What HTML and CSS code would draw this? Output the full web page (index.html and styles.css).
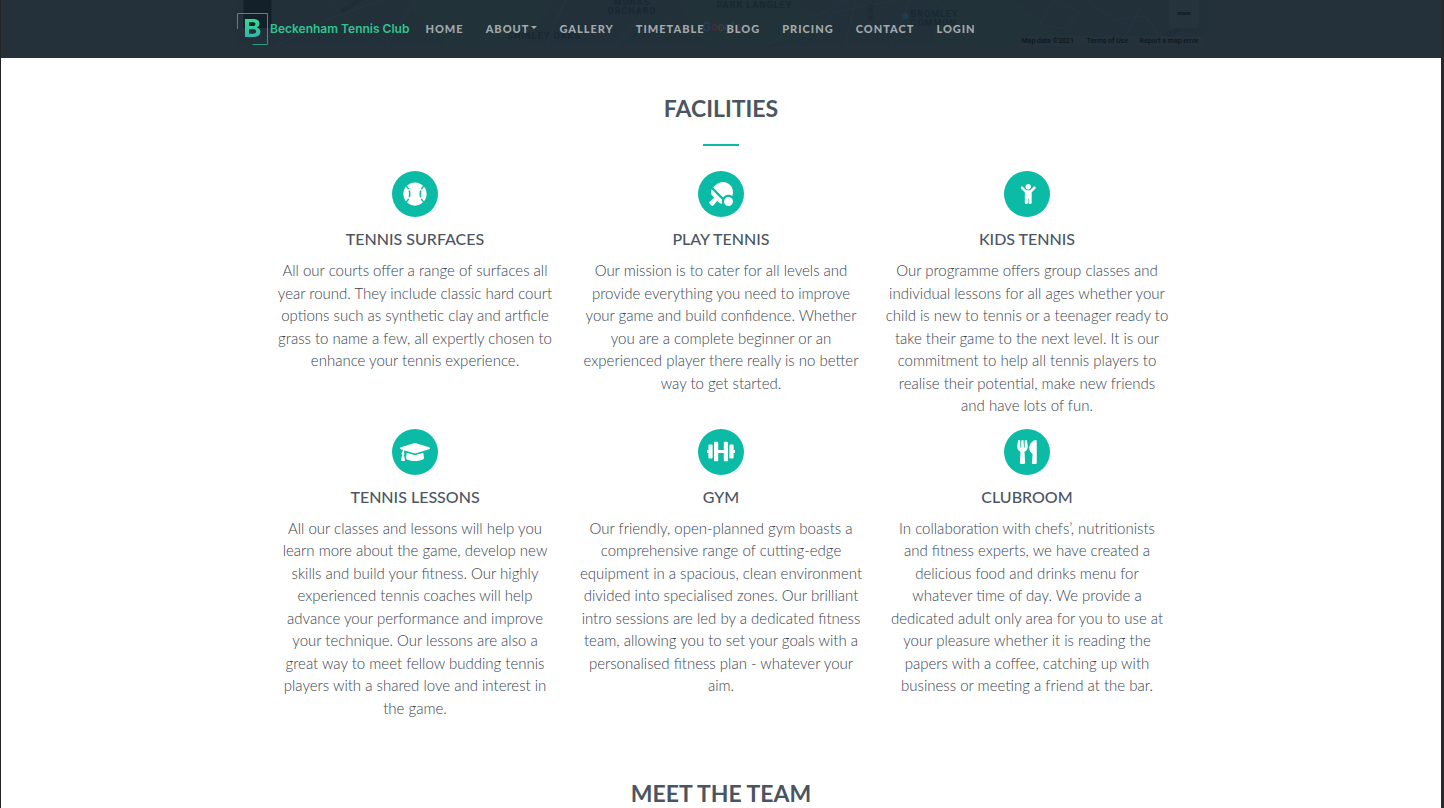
FILE: index.html
```html
<!DOCTYPE html>
<html lang="en">
<head>
<meta charset="utf-8">
<title>Beckenham Tennis Club</title>
<link rel="stylesheet" href="styles.css">
</head>
<body>
<header class="navbar">
  <svg class="map" viewBox="0 0 971 46" aria-hidden="true">
    <rect width="971" height="46" fill="#22303a"/>
    <path fill="#213238" d="M170 0h150l-30 46h-80zM440 0h120l40 30-70 16h-60zM690 0h90l60 46H700z"/>
    <rect x="8" width="28" height="28" fill="#142029"/>
    <path fill="none" stroke="#26353f" d="M40 46l60-30 50-16M90 0l50 46M150 46l30-46M200 0l60 46M240 46l70-46M330 0l-20 46M380 46l40-46M430 20l60 26M500 46l40-46M530 46l50-30 30-16M560 46l40-34 60-12M610 46l10-46M655 46l20-46M700 0l50 46M804 26l14-26 26 12-14 16zM850 0l30 20 30-4 20 30M885 46l20-40"/>
    <g class="map-label">
      <text x="378" y="5">MONKS</text>
      <text x="372" y="14">ORCHARD</text>
      <text x="481" y="8">PARK LANGLEY</text>
      <text x="272" y="39">SHIRLEY OAKS</text>
      <text x="675" y="17">BROMLEY</text>
      <text x="675" y="26">COMMON</text>
    </g>
    <g class="map-road">
      <text transform="translate(107 14) rotate(-35)">Windmill</text>
      <text transform="translate(637 20) rotate(-88)">B265</text>
      <text transform="translate(932 37) rotate(-25)">Orpin</text>
    </g>
    <text class="map-brand" x="467" y="31"><tspan fill="#263e59">G</tspan><tspan fill="#442e38">o</tspan><tspan fill="#403b36">o</tspan><tspan fill="#263e59">g</tspan><tspan fill="#26453c">l</tspan><tspan fill="#442e38">e</tspan></text>
    <circle cx="670" cy="16" r="3" fill="#203d50"/>
    <rect x="934" width="29" height="28" fill="#25343c"/>
    <rect x="942" y="12" width="13" height="3" fill="#17232b"/>
    <rect x="782" y="36" width="189" height="10" fill="#24323b"/>
    <g class="map-credit">
      <text x="786" y="43">Map data ©2021</text>
      <text x="851" y="43">Terms of Use</text>
      <text x="904" y="43">Report a map error</text>
    </g>
  </svg>
  <nav class="nav">
    <a class="brand" href="#">
      <svg class="brand-mark" viewBox="0 0 33 34" aria-hidden="true">
        <defs><linearGradient id="mint" x2="0" y2="1"><stop stop-color="#36d991"/><stop offset="1" stop-color="#35b5ad"/></linearGradient></defs>
        <path d="M1.500 17V1.500H31.500V32.500H16.500" fill="none" stroke="#2b9b83"/>
        <path fill="url(#mint)" fill-rule="evenodd" d="M9 7h8.500c4 0 6 1.700 6 4.600 0 1.900-1 3.200-2.600 3.800 2.200.6 3.500 2.200 3.500 4.400 0 3.400-2.400 5.200-6.500 5.200H9zM13 10.200v3.900h3.800c1.700 0 2.600-.6 2.600-2 0-1.300-.9-1.900-2.600-1.900zM13 17.300v4.400h4.200c1.900 0 2.900-.7 2.900-2.200s-1-2.200-2.900-2.200z"/>
      </svg>
      <span>Beckenham Tennis Club</span>
    </a>
    <ul class="menu">
      <li><a href="#">Home</a></li>
      <li><a class="dropdown" href="#">About</a></li>
      <li><a href="#">Gallery</a></li>
      <li><a href="#">Timetable</a></li>
      <li><a href="#">Blog</a></li>
      <li><a href="#">Pricing</a></li>
      <li><a href="#">Contact</a></li>
      <li><a href="#">Login</a></li>
    </ul>
  </nav>
</header>
<main>
  <section class="section">
    <h2>Facilities</h2>
    <hr class="rule">
    <div class="features">
      <article class="feature">
        <div class="badge"><svg width="24" height="24" viewBox="0 0 496 512" aria-hidden="true"><path d="M368.500 363.900l28.800-13.900c11.100 22.900 26 43.200 44.100 60.900 34-42.500 54.500-96.300 54.500-154.900 0-58.500-20.400-112.200-54.200-154.600-17.800 17.300-32.600 37.100-43.600 59.500l-28.700-14.100c12.800-26 30-49 50.800-69C375.600 34.700 315 8 248 8 181.100 8 120.500 34.600 75.900 77.700c20.700 19.900 37.900 42.900 50.700 68.800l-28.700 14.100c-11-22.300-25.700-42.100-43.500-59.400C20.400 143.700 0 197.400 0 256c0 58.600 20.400 112.300 54.400 154.700 18.200-17.700 33.200-38 44.300-61l28.800 13.900c-12.900 26.700-30.300 50.300-51.500 70.700 44.500 43.100 105.100 69.700 172 69.700 66.800 0 127.300-26.500 171.900-69.500-21.100-20.400-38.500-43.900-51.400-70.600zm-228.300-32l-30.500-9.800c14.900-46.400 12.700-93.800-.6-134l30.400-10c15 45.600 18 99.900.7 153.800zm216.300-153.400l30.400 10c-13.200 40.100-15.500 87.500-.6 134l-30.500 9.800c-17.300-54-14.300-108.300.7-153.800z"/></svg></div>
        <h3>Tennis Surfaces</h3>
        <p>All our courts offer a range of surfaces all year round. They include classic hard court options such as synthetic clay and artficle grass to name a few, all expertly chosen to enhance your tennis experience.</p>
      </article>
      <article class="feature">
        <div class="badge"><svg width="24" height="24" viewBox="0 0 512 512" aria-hidden="true"><path d="M496.200 296.500C527.700 218.700 512 126.200 449 63.100 365.100-21 229-21 145.100 63.100l-56 56.100 211.500 211.500c46.100-62.100 131.500-77.400 195.600-34.200zm-217.900 79.700L57.900 155.900c-27.300 45.300-21.700 105 17.300 144.100l34.500 34.600L6.700 424c-8.600 7.500-9.100 20.700-1 28.800l53.400 53.500c8 8.100 21.200 7.600 28.700-1L177.100 402l35.700 35.700c19.700 19.700 44.600 30.500 70.300 33.300-7.100-17-11-35.600-11-55.100-.1-13.800 2.500-27 6.200-39.700zM416 320c-53 0-96 43-96 96s43 96 96 96 96-43 96-96-43-96-96-96z"/></svg></div>
        <h3>Play Tennis</h3>
        <p>Our mission is to cater for all levels and provide everything you need to improve your game and build confidence. Whether you are a complete beginner or an experienced player there really is no better way to get started.</p>
      </article>
      <article class="feature">
        <div class="badge"><svg width="18" height="20" viewBox="-64 0 448 512" aria-hidden="true"><path d="M120 72c0-39.765 32.235-72 72-72s72 32.235 72 72c0 39.764-32.235 72-72 72s-72-32.236-72-72zm254.627 1.373c-12.496-12.497-32.758-12.497-45.254 0L242.745 160H141.254L54.627 73.373c-12.496-12.497-32.758-12.497-45.254 0-12.497 12.497-12.497 32.758 0 45.255L104 213.254V480c0 17.673 14.327 32 32 32h16c17.673 0 32-14.327 32-32V368h16v112c0 17.673 14.327 32 32 32h16c17.673 0 32-14.327 32-32V213.254l94.627-94.627c12.497-12.497 12.497-32.757 0-45.254z"/></svg></div>
        <h3>Kids Tennis</h3>
        <p>Our programme offers group classes and individual lessons for all ages whether your child is new to tennis or a teenager ready to take their game to the next level. It is our commitment to help all tennis players to realise their potential, make new friends and&nbsp;have lots of fun.</p>
      </article>
      <article class="feature">
        <div class="badge"><svg width="30" height="24" viewBox="0 0 640 512" aria-hidden="true"><path d="M622.340 153.200L343.400 67.500c-15.200-4.670-31.600-4.670-46.790 0L17.660 153.200c-23.540 7.230-23.540 38.360 0 45.590l48.630 14.940c-10.670 13.190-17.230 29.280-17.880 46.900C38.780 266.150 32 276.110 32 288c0 10.780 5.680 19.850 13.860 25.650L20.330 428.530C18.110 438.520 25.710 448 35.940 448h56.110c10.240 0 17.840-9.480 15.620-19.470L82.140 313.650C90.320 307.850 96 298.780 96 288c0-11.570-6.470-21.250-15.660-26.870.76-15.020 8.440-28.300 20.690-36.720L296.600 284.500c9.060 2.780 26.440 6.250 46.790 0l278.950-85.700c23.550-7.240 23.550-38.360 0-45.600zM352.790 315.090c-28.530 8.760-52.840 3.920-65.590 0l-145.020-44.550L128 384c0 35.350 85.960 64 192 64s192-28.650 192-64l-14.180-113.470-145.030 44.560z"/></svg></div>
        <h3>Tennis Lessons</h3>
        <p>All our classes and lessons will help you learn more about the game, develop new skills and build your fitness. Our highly experienced tennis coaches will help advance your performance and improve your technique. Our lessons are also a great&nbsp;way to meet fellow budding tennis players with a shared love and interest in the&nbsp;game.</p>
      </article>
      <article class="feature">
        <div class="badge"><svg width="28" height="23" viewBox="0 0 640 512" aria-hidden="true"><path d="M104 96H56c-13.300 0-24 10.700-24 24v104H8c-4.400 0-8 3.600-8 8v48c0 4.400 3.600 8 8 8h24v104c0 13.300 10.700 24 24 24h48c13.300 0 24-10.700 24-24V120c0-13.300-10.700-24-24-24zm528 128h-24V120c0-13.300-10.700-24-24-24h-48c-13.300 0-24 10.700-24 24v272c0 13.300 10.700 24 24 24h48c13.300 0 24-10.700 24-24V288h24c4.400 0 8-3.600 8-8v-48c0-4.400-3.600-8-8-8zM456 32h-48c-13.300 0-24 10.700-24 24v168H256V56c0-13.300-10.700-24-24-24h-48c-13.300 0-24 10.700-24 24v400c0 13.300 10.700 24 24 24h48c13.300 0 24-10.700 24-24V288h128v168c0 13.300 10.700 24 24 24h48c13.300 0 24-10.700 24-24V56c0-13.300-10.700-24-24-24z"/></svg></div>
        <h3>Gym</h3>
        <p>Our friendly, open-planned gym boasts a comprehensive range of cutting-edge equipment in a spacious, clean environment divided into specialised zones. Our brilliant intro sessions are led by a dedicated fitness team, allowing you to set your goals with a personalised fitness plan - whatever your aim.</p>
      </article>
      <article class="feature">
        <div class="badge"><svg width="20" height="24" viewBox="0 0 416 512" aria-hidden="true"><path d="M207.900 15.200c.8 4.700 16.100 94.500 16.100 128.800 0 52.300-27.800 89.600-68.900 104.600L168 486.700c.7 13.700-10.200 25.300-24 25.300H80c-13.700 0-24.700-11.500-24-25.300l12.900-238.100C27.700 233.600 0 196.200 0 144 0 109.600 15.300 19.900 16.100 15.200 19.300-5.100 61.400-5.400 64 16.300v141.200c1.300 3.400 15.100 3.200 16 0 1.400-25.300 7.900-139.200 8-141.800 3.300-20.800 44.700-20.800 47.900 0 .2 2.700 6.600 116.500 8 141.800.9 3.200 14.800 3.400 16 0V16.300c2.600-21.600 44.800-21.400 47.900-1.100zm119.200 285.700l-15 185.100c-1.200 14 9.900 26 23.900 26h56c13.300 0 24-10.700 24-24V24c0-13.200-10.700-24-24-24-82.500 0-221.400 178.500-64.900 300.900z"/></svg></div>
        <h3>Clubroom</h3>
        <p>In collaboration with chefs’, nutritionists and&nbsp;fitness experts, we have created a delicious food and drinks menu for whatever&nbsp;time of day. We provide a dedicated adult only area for you to use at your pleasure whether it is reading the papers with a coffee, catching up with business or meeting a friend at the bar.</p>
      </article>
    </div>
  </section>
  <section class="section">
    <h2>Meet the Team</h2>
  </section>
</main>
</body>
</html>
```
FILE: styles.css
```css
* {
  box-sizing: border-box;
}

html {
  scrollbar-width: none;
}

body {
  margin: 0;
  border-left: 1px solid #232426;
  border-right: 3px solid #2a2a2c;
  background: #fff;
  color: #4b5561;
  font: 300 15px/1.5 Lato, sans-serif;
}

.navbar {
  position: sticky;
  top: 0;
  display: flex;
  justify-content: center;
  height: 58px;
  background: #24303a;
}

.map {
  position: absolute;
  top: 0;
  left: 50%;
  width: 971px;
  height: 46px;
  transform: translateX(-50%);
}

.map-label {
  fill: #192933;
  font: 700 9px Roboto, sans-serif;
  letter-spacing: 1px;
}

.map-road {
  fill: #1a2930;
  font: 400 7px Roboto, sans-serif;
}

.map-brand {
  font: 500 12px Roboto, sans-serif;
}

.map-credit {
  fill: #0e181f;
  font: 500 7px Roboto, sans-serif;
}

.nav {
  position: relative;
  display: flex;
  align-items: center;
  gap: 16px;
  width: 100%;
  max-width: 970px;
}

.nav a {
  color: inherit;
  text-decoration: none;
}

.brand {
  display: flex;
  align-items: center;
  gap: 1px;
  font: 600 12px/16px Inter, sans-serif;
}

.nav .brand {
  color: #32c48f;
}

.brand-mark {
  width: 33px;
  height: 34px;
}

.menu {
  display: flex;
  gap: 22px;
  margin: 0;
  padding: 0;
  list-style: none;
  color: #a3a8ac;
  font-size: 11px;
  font-weight: 900;
  letter-spacing: 1px;
  text-transform: uppercase;
}

.dropdown::after {
  display: inline-block;
  margin-left: 2px;
  border: 3px solid transparent;
  border-top-color: currentColor;
  border-bottom: 0;
  vertical-align: 4px;
  content: "";
}

.section {
  max-width: 948px;
  margin: 0 auto;
  padding: 32px 15px 24px;
  text-align: center;
}

h2 {
  margin: 0;
  font-size: 23px;
  font-weight: 700;
  line-height: 36px;
  text-transform: uppercase;
}

.rule {
  width: 36px;
  height: 2px;
  margin: 18px auto 25px;
  border: 0;
  background: #0bbba5;
}

.features {
  display: grid;
  grid-template-columns: repeat(3, 1fr);
  row-gap: 12px;
}

.feature {
  padding: 0 10px;
}

.badge {
  display: grid;
  place-items: center;
  width: 46px;
  height: 46px;
  margin: 0 auto 11px;
  border-radius: 50%;
  background: #0bbba5;
  fill: #fff;
}

h3 {
  margin: 0 0 9px;
  font-size: 16px;
  font-weight: 500;
  line-height: 22px;
  text-transform: uppercase;
}

p {
  margin: 0;
  color: #39434f;
}
```
